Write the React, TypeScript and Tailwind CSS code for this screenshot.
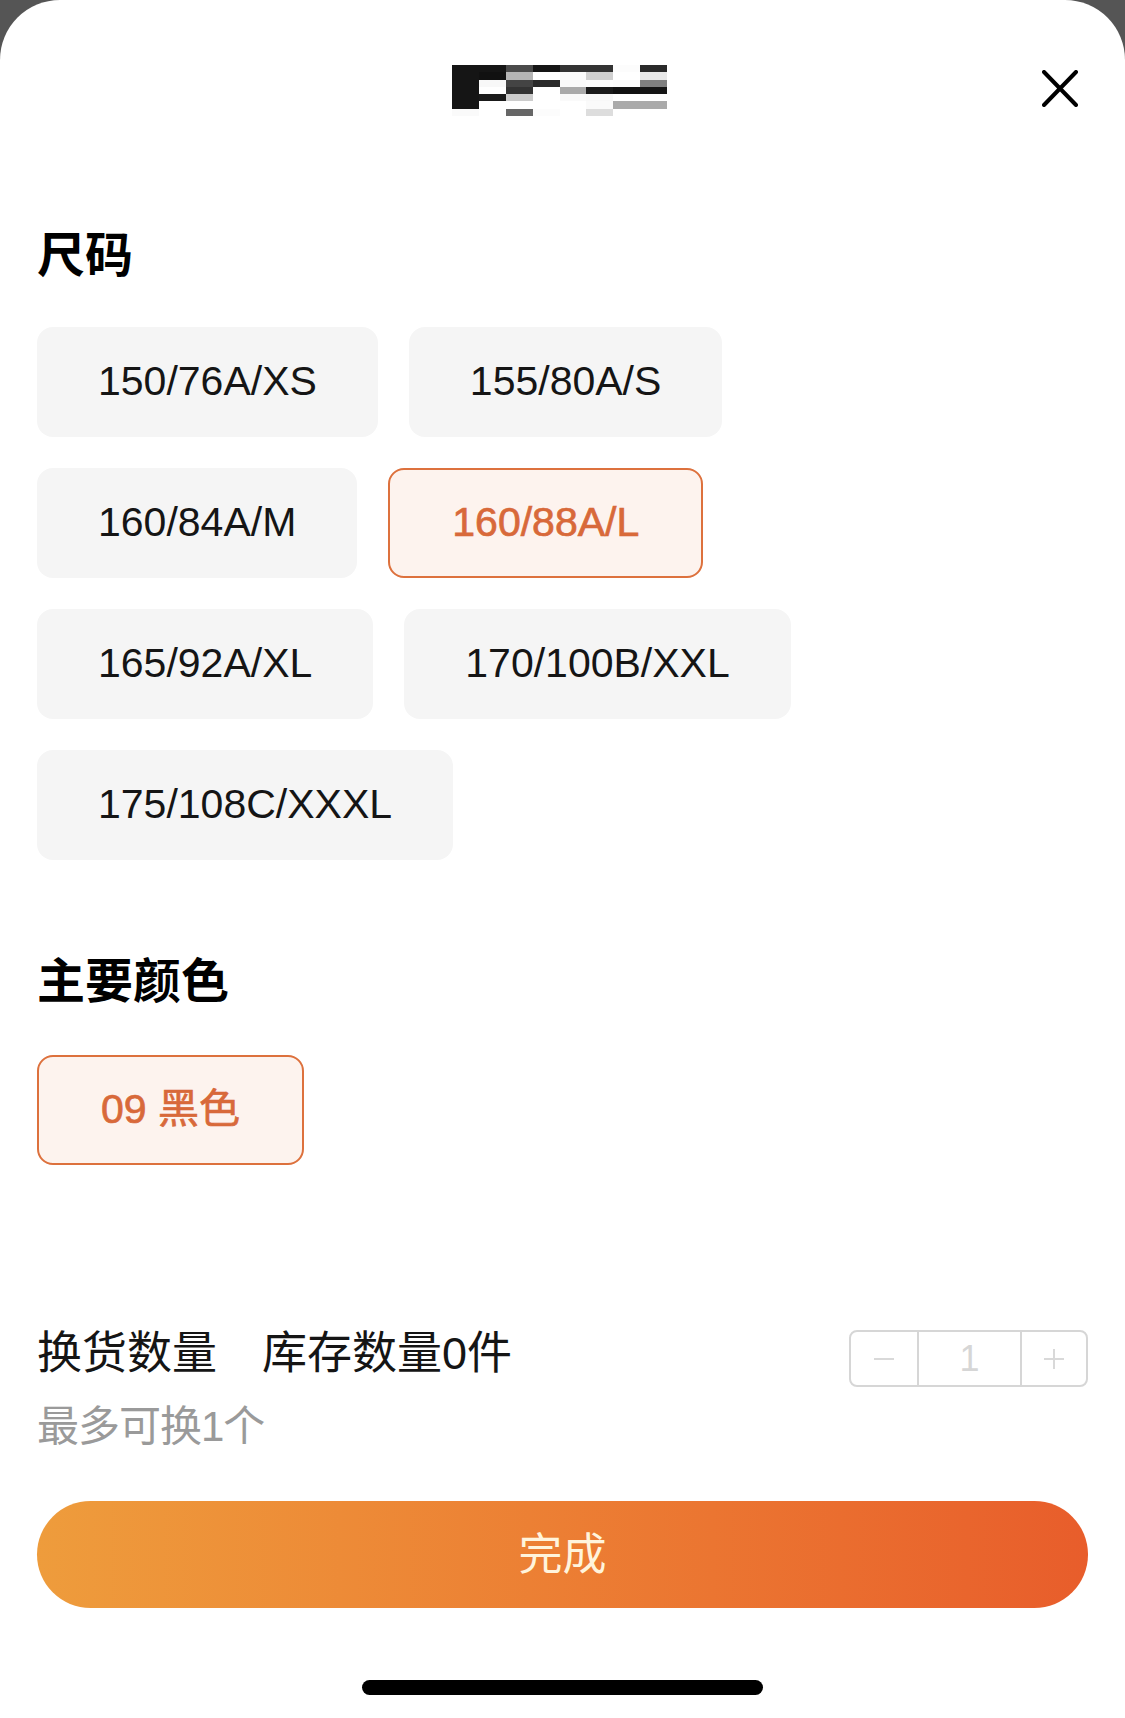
import React from 'react';

const sizes = [
  '150/76A/XS',
  '155/80A/S',
  '160/84A/M',
  '160/88A/L',
  '165/92A/XL',
  '170/100B/XXL',
  '175/108C/XXXL',
];

// pixelated (censored) brand mark, 8 x 7 cells
const logoCells = [
  ['#151515', '#151515', '#4a4a4a', '#151515', '#333333', '#333333', '#fcfcfc', '#2a2a2a'],
  ['#151515', '#111111', '#b5b5b5', '#ffffff', '#fafafa', '#d0d0d0', '#ffffff', '#e8e8e8'],
  ['#151515', '#f8f8f8', '#444444', '#2a2a2a', '#fafafa', '#fcfcfc', '#fafafa', '#808080'],
  ['#151515', '#ffffff', '#333333', '#ffffff', '#aaaaaa', '#1a1a1a', '#111111', '#151515'],
  ['#151515', '#1a1a1a', '#cccccc', '#ffffff', '#fafafa', '#f8f8f8', '#ffffff', '#ffffff'],
  ['#151515', '#ffffff', '#ffffff', '#ffffff', '#ffffff', '#fafafa', '#aaaaaa', '#aaaaaa'],
  ['#fafafa', '#ffffff', '#666666', '#fcfcfc', '#ffffff', '#dddddd', '#ffffff', '#ffffff'],
];

const Logo = () => (
  <svg width="215" height="51" viewBox="0 0 8 7" preserveAspectRatio="none" shapeRendering="crispEdges">
    {logoCells.map((row, r) =>
      row.map((c, i) => <rect key={`${r}-${i}`} x={i} y={r} width="1.02" height="1.02" fill={c} />)
    )}
  </svg>
);

const Chip = ({ label, active }: { label: string; active?: boolean }) => (
  <button
    className={
      active
        ? 'h-[110px] px-[62px] rounded-[16px] border-[2.5px] border-[#dd713d] bg-[#fdf3ee] text-[#d8693a] text-[41px] [-webkit-text-stroke:0.7px_#d8693a] flex items-center'
        : 'h-[110px] px-[61px] rounded-[16px] bg-[#f5f5f5] text-[#151515] text-[41px] flex items-center'
    }
  >
    {label}
  </button>
);

export default function App() {
  return (
    <div className="w-[1125px] h-[1718px] bg-[#555555] font-['Liberation_Sans','Noto_Sans_CJK_SC',sans-serif]">
      <div className="h-full bg-white rounded-t-[60px] flex flex-col px-[37px]">
        {/* header */}
        <div className="relative flex justify-center pt-[65px]">
          <div className="mr-[6px]">
            <Logo />
          </div>
          <button className="absolute right-[10px] top-[70px]">
            <svg width="36" height="37" viewBox="0 0 36 37">
              <path d="M2 2 L34 35 M34 2 L2 35" stroke="#000" strokeWidth="4" strokeLinecap="round" />
            </svg>
          </button>
        </div>

        <h2 className="mt-[116px] text-[48px] leading-[48px] font-semibold text-black">尺码</h2>
        <div className="mt-[47px] flex flex-wrap gap-[31px] max-w-[880px]">
          {sizes.map((s) => (
            <Chip key={s} label={s} active={s === '160/88A/L'} />
          ))}
        </div>

        <h2 className="mt-[98px] text-[48px] leading-[48px] font-semibold text-black">主要颜色</h2>
        <div className="mt-[49px] flex">
          <Chip label="09 黑色" active />
        </div>

        {/* quantity */}
        <div className="mt-[167px] flex items-start justify-between">
          <div>
            <div className="text-[45px] leading-[44px] text-[#151515] flex">
              <span>换货数量</span>
              <span className="ml-[45px]">库存数量0件</span>
            </div>
            <div className="mt-[30px] text-[42px] leading-[42px] tracking-[-1px] text-[#9a9a9a]">最多可换1个</div>
          </div>
          <div className="mt-[-2px] flex h-[57px] border-2 border-[#d6d6d6] rounded-[8px] text-[#d6d6d6]">
            <div className="w-[68px] flex items-center justify-center border-r-2 border-[#d6d6d6]">
              <div className="w-[20px] h-[2px] bg-[#d9d9d9]" />
            </div>
            <div className="w-[103px] flex items-center justify-center border-r-2 border-[#d6d6d6] text-[36px] leading-none">
              1
            </div>
            <div className="w-[64px] flex items-center justify-center">
              <svg width="22" height="22" viewBox="0 0 22 22">
                <path d="M11 1 V21 M1 11 H21" stroke="#d9d9d9" strokeWidth="2" />
              </svg>
            </div>
          </div>
        </div>

        <button className="mt-[53px] h-[107px] rounded-full bg-linear-to-r from-[#ee9c3c] to-[#e85d2b] text-[#fff4dc] text-[44px] flex items-center justify-center">
          完成
        </button>

        <div className="mt-[72px] flex justify-center">
          <div className="w-[401px] h-[15px] rounded-full bg-black" />
        </div>
      </div>
    </div>
  );
}
